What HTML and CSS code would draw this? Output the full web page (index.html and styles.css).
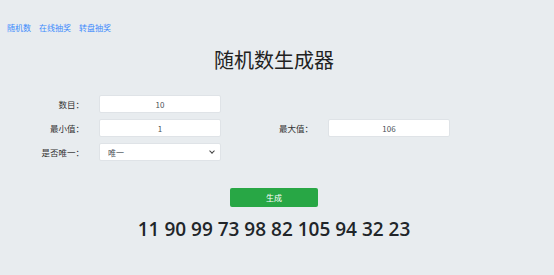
FILE: index.html
```html
<!DOCTYPE html>
<html lang="zh-CN">

<head>
    <meta charset="UTF-8">
    <meta name="viewport" content="width=device-width, initial-scale=1.0">
    <title>随机数生成器</title>
    <link rel="stylesheet" href="styles.css">
</head>

<body>
    <div class="page">
        <ul class="nav">
            <li><a href="#">随机数</a></li>
            <li><a href="#">在线抽奖</a></li>
            <li><a href="#">转盘抽奖</a></li>
        </ul>

        <h1 class="title">随机数生成器</h1>

        <div class="form">
            <label class="label">数目：</label>
            <input class="field" type="text" value="10">
            <span></span>
            <span></span>

            <label class="label">最小值：</label>
            <input class="field" type="text" value="1">
            <label class="label">最大值：</label>
            <input class="field" type="text" value="106">

            <label class="label">是否唯一：</label>
            <div class="select-wrap">
                <select class="field select">
                    <option>唯一</option>
                    <option>不唯一</option>
                </select>
            </div>
        </div>

        <div class="actions">
            <button class="btn" id="gen">生成</button>
        </div>

        <div class="result" id="result">11 90 99 73 98 82 105 94 32 23</div>
    </div>
</body>

</html>
```

FILE: styles.css
```css
* {
    margin: 0;
    padding: 0;
    box-sizing: border-box;
}

body {
    background-color: #e8ecef;
    font-family: "Noto Sans CJK SC", "Noto Sans", sans-serif;
    color: #333;
}

li {
    list-style-type: none;
}

a {
    text-decoration: none;
}

.page {
    width: 548px;
    padding-top: 22px;
}

.nav {
    display: flex;
    gap: 8px;
    padding-left: 7px;
    font-size: 8px;
    line-height: 12px;
}

.nav a {
    color: #3d8bfd;
}

.title {
    margin-top: 12px;
    text-align: center;
    font-size: 20px;
    font-weight: 400;
    line-height: 28px;
    color: #222;
}

.form {
    margin-top: 21px;
    display: grid;
    grid-template-columns: 84px 122px 77px 122px;
    column-gap: 15px;
    row-gap: 6px;
    font-size: 8px;
}

.label {
    text-align: right;
    line-height: 18px;
    font-size: 8.5px;
    color: #333;
}

.field {
    width: 100%;
    height: 18px;
    border: 1px solid #dfe3e7;
    border-radius: 2px;
    background-color: #fff;
    font-family: "Noto Sans CJK SC", "Noto Sans", sans-serif;
    font-size: 8px;
    color: #495057;
    text-align: center;
    outline: none;
}

.select-wrap {
    position: relative;
}

.select {
    appearance: none;
    -webkit-appearance: none;
    text-align: left;
    padding-left: 8px;
}

.select-wrap::after {
    content: "";
    position: absolute;
    right: 7px;
    top: 6px;
    width: 3px;
    height: 3px;
    border-right: 1.2px solid #444;
    border-bottom: 1.2px solid #444;
    transform: rotate(45deg);
    pointer-events: none;
}

.actions {
    margin-top: 27px;
    display: flex;
    justify-content: center;
}

.btn {
    width: 88px;
    height: 19px;
    border: none;
    border-radius: 2px;
    background-color: #28a745;
    color: #fff;
    font-family: "Noto Sans CJK SC", "Noto Sans", sans-serif;
    font-size: 8px;
    cursor: pointer;
}

.result {
    margin-top: 8px;
    text-align: center;
    font-family: "Open Sans", "Noto Sans", sans-serif;
    font-size: 19px;
    font-weight: 600;
    line-height: 28px;
    color: #212529;
}
```
